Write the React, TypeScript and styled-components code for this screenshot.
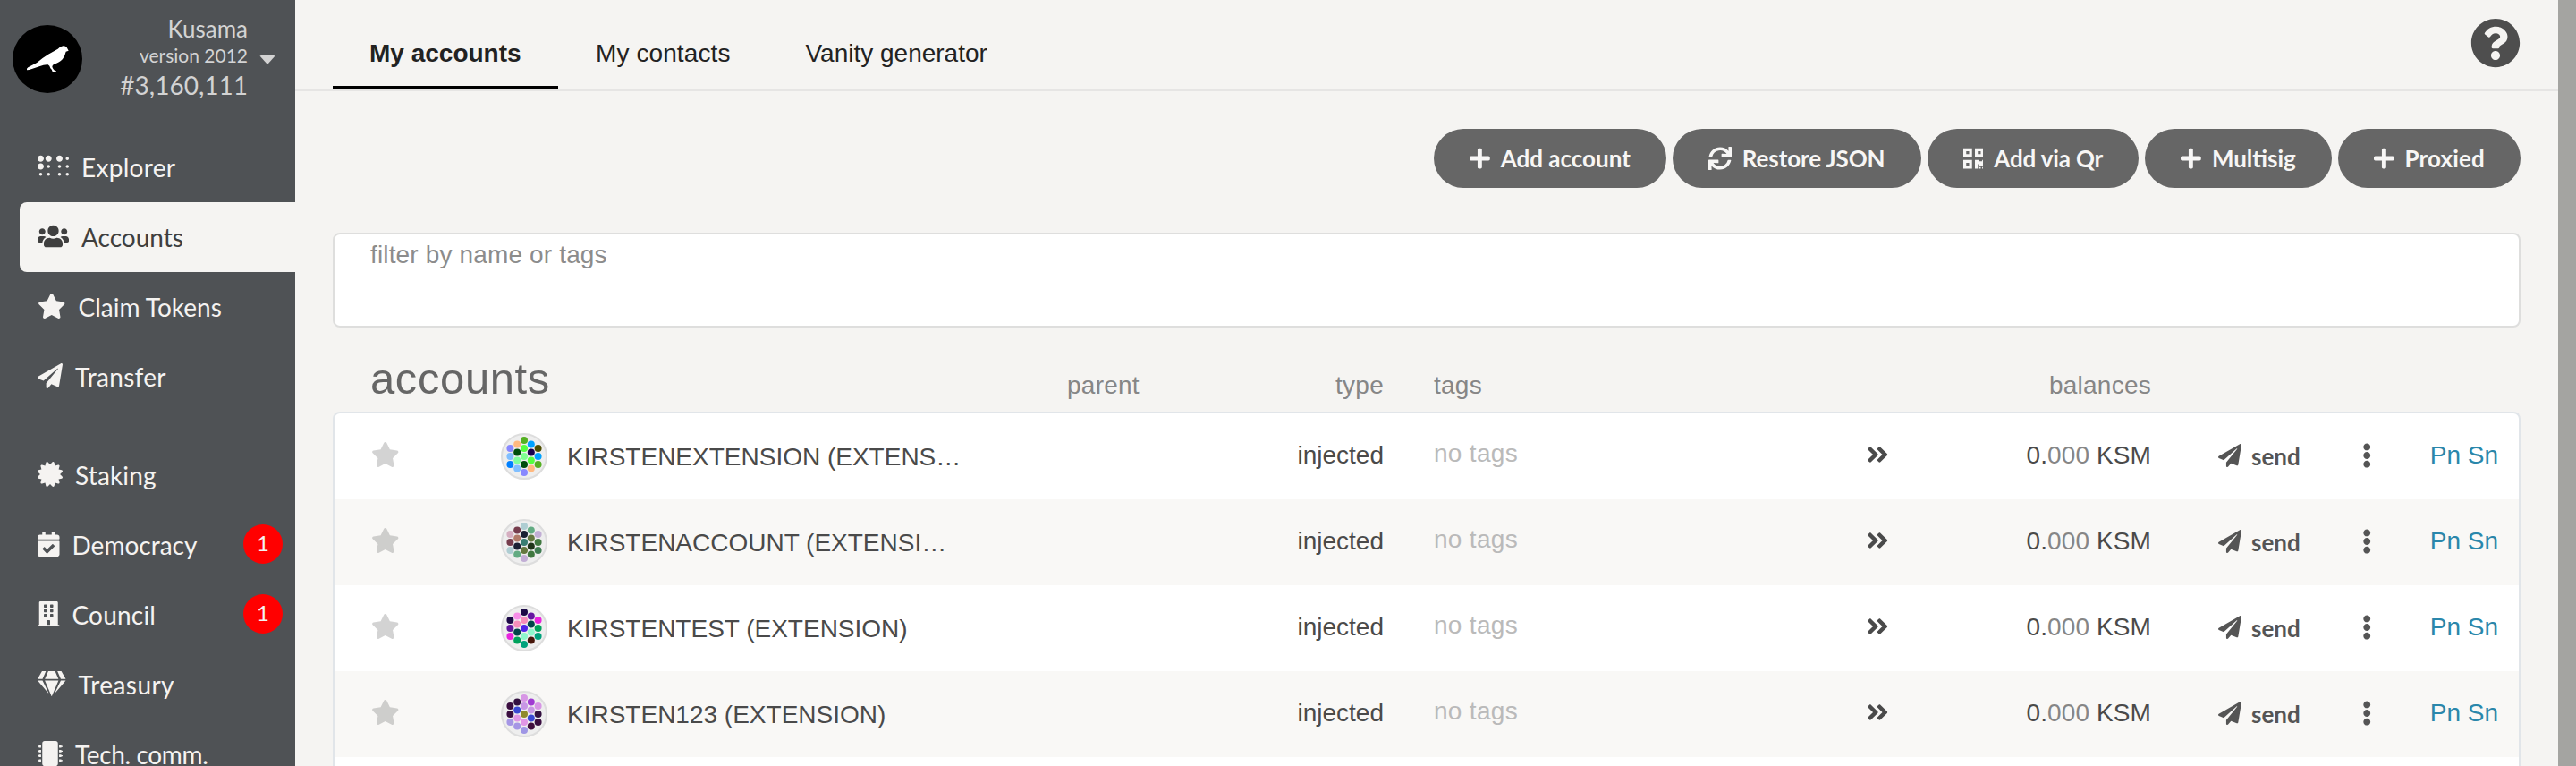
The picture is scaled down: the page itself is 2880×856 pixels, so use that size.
import React from 'react';
import styled, { createGlobalStyle, css } from 'styled-components';
import {
  FaAngleDoubleRight,
  FaBraille,
  FaBuilding,
  FaCalendarCheck,
  FaCertificate,
  FaEllipsisV,
  FaGem,
  FaMicrochip,
  FaPaperPlane,
  FaPlus,
  FaQrcode,
  FaQuestionCircle,
  FaStar,
  FaSync,
  FaUsers,
} from 'react-icons/fa';
import type { IconType } from 'react-icons';

const SANS = '"Liberation Sans", Arial, sans-serif';
const LATO = 'Lato, "Liberation Sans", sans-serif';

const GlobalStyle = createGlobalStyle`
  *, *::before, *::after { box-sizing: border-box; }
  html, body { margin: 0; padding: 0; background: #f5f4f2; overflow: hidden; }
  svg { display: block; flex: none; }
`;

const Page = styled.div`
  display: flex;
  width: 100%;
  height: 856px;
  overflow: hidden;
  background: #f5f4f2;
  color: #4a4a4a;
  font-family: ${SANS};
  font-size: 28px;
`;

/* $ratio is the icon's width over its height. */
const Glyph = styled.span<{ $size: number; $ratio?: number }>`
  flex: none;
  display: inline-flex;

  svg {
    width: ${(p) => p.$size * (p.$ratio ?? 1)}px;
    height: ${(p) => p.$size}px;
  }
`;

/* ---------- sidebar ---------- */

const Sidebar = styled.aside`
  flex: none;
  width: 330px;
  height: 100%;
  overflow: hidden;
  background: #4f5255;
  color: #f5f3f1;
  font-family: ${LATO};
`;

const ChainInfo = styled.div`
  display: flex;
  align-items: flex-start;
  height: 148px;
  padding: 16px 22px 0 14px;
`;

const ChainLogo = styled.svg`
  width: 78px;
  height: 76px;
  margin-top: 12px;
`;

const ChainText = styled.div`
  flex: 1;
  display: flex;
  flex-direction: column;
  text-align: right;
  color: #d3d3d3;
  white-space: nowrap;
`;

const ChainName = styled.div`
  font-size: 26px;
  line-height: 32px;
`;

const ChainVersion = styled.div`
  font-size: 21px;
  line-height: 28px;
`;

const BestBlock = styled.div`
  font-size: 28px;
  line-height: 38px;
`;

const Caret = styled.span`
  width: 0;
  height: 0;
  margin: 46px 0 0 13px;
  border: 9px solid transparent;
  border-bottom: 0;
  border-top: 10px solid #d3d3d3;
  border-radius: 2px;
`;

const NavGroup = styled.nav`
  & + & {
    margin-top: 32px;
  }
`;

const NavItem = styled.a<{ $active?: boolean }>`
  display: flex;
  align-items: center;
  height: 78px;
  margin-left: 22px;
  padding: 0 14px 0 20px;
  border-radius: 8px 0 0 8px;
  ${(p) =>
    p.$active &&
    css`
      background: #f5f4f2;
      color: #3f3f3f;
    `}

  ${Glyph} {
    margin: -2px 14px 0 0;
  }
`;

const NavLabel = styled.span<{ $tracking?: number }>`
  font-size: 28px;
  line-height: 36px;
  letter-spacing: ${(p) => p.$tracking ?? 0}px;
  white-space: nowrap;
`;

const Counter = styled.span`
  width: 44px;
  height: 44px;
  margin: -2px 0 0 auto;
  border-radius: 50%;
  background: #ff0000;
  font-size: 24px;
  line-height: 42px;
  text-align: center;
`;

/* ---------- content ---------- */

const Main = styled.main`
  flex: 1;
  min-width: 0;
`;

const TabBar = styled.header`
  display: flex;
  height: 102px;
  padding: 0 42px;
  border-bottom: 2px solid #e6e5e4;
`;

const Tab = styled.a<{ $active?: boolean; $tracking?: number }>`
  height: 100px;
  padding: 28px 42px 0;
  line-height: 64px;
  color: #222;
  letter-spacing: ${(p) => p.$tracking ?? 0}px;
  white-space: nowrap;
  ${(p) =>
    p.$active &&
    css`
      width: 252px;
      padding-left: 41px;
      border-bottom: 4px solid #000;
      font-weight: 700;
    `}
`;

const Help = styled.span`
  margin: 20px 0 0 auto;
  color: #4e4e4e;
`;

const Content = styled.div`
  padding: 42px 42px 0;
`;

const ButtonRow = styled.div`
  display: flex;
  justify-content: flex-end;
  gap: 7px;
`;

const Button = styled.button<{ $tracking?: number }>`
  display: flex;
  align-items: center;
  gap: 12px;
  height: 66px;
  padding: 0 40px;
  border: 0;
  border-radius: 33px;
  background: #666;
  color: #f7f6f5;
  font: 700 26px/34px ${LATO};
  letter-spacing: ${(p) => p.$tracking ?? 0}px;
  white-space: nowrap;
`;

const Filter = styled.div`
  height: 106px;
  margin-top: 50px;
  padding: 6px 40px;
  border: 2px solid #dededd;
  border-radius: 8px;
  background: #fff;
  color: #8c8c8c;
  line-height: 34px;
  letter-spacing: 0.15px;
`;

const columns = '186px 632px 161px 194px 540px 60px 258px 203px 76px 132px';

const TableHead = styled.div`
  display: grid;
  grid-template-columns: ${columns};
  align-items: baseline;
  height: 94px;
  padding: 27px 2px 0;
  color: #868686;
  line-height: 60px;
  letter-spacing: 0.25px;
`;

const Title = styled.h1`
  grid-column: span 2;
  margin: 0;
  padding-left: 40px;
  color: #666;
  font-size: 49px;
  font-weight: 400;
  line-height: 60px;
  letter-spacing: 0.6px;
`;

const HeadCell = styled.span<{ $span?: number; $right?: boolean; $pad?: number }>`
  grid-column: span ${(p) => p.$span ?? 1};
  padding-left: ${(p) => p.$pad ?? 0}px;
  text-align: ${(p) => (p.$right ? 'right' : 'left')};
`;

const TableBody = styled.div`
  border: 2px solid #e1e5e9;
  border-bottom: 0;
  border-radius: 8px 8px 0 0;
  background: #fff;
`;

const Row = styled.div`
  display: grid;
  grid-template-columns: ${columns};
  align-items: center;
  height: 96px;
  line-height: 34px;
  white-space: nowrap;
  &:nth-child(even) {
    background: #f9f8f6;
  }
`;

const Favorite = styled.span`
  display: flex;
  padding: 0 0 4px 41px;
  color: rgba(78, 78, 78, 0.25);
`;

const Account = styled.div`
  display: flex;
  align-items: center;
  gap: 22px;
`;

const AccountName = styled.span`
  padding-top: 1px;
`;

const Kind = styled.span`
  grid-column: 4;
  padding-bottom: 3px;
  text-align: right;
`;

const Tags = styled.span`
  padding: 0 0 7px 56px;
  color: #bababa;
  letter-spacing: 0.3px;
`;

const Expand = styled.span`
  display: flex;
  padding-bottom: 4px;
`;

const Balance = styled.span`
  padding-bottom: 3px;
  text-align: right;
  letter-spacing: 0.1px;
`;

const Decimals = styled.span`
  color: #868686;
`;

const Send = styled.span`
  display: flex;
  align-items: center;
  gap: 11px;
  padding-left: 75px;
  color: #555;
  font: 700 26px/34px ${LATO};

  ${Glyph} {
    margin-top: -2px;
  }
`;

const Menu = styled.span`
  display: flex;
  padding: 0 0 2px 33px;
  color: #555;
`;

const Links = styled.span`
  padding: 0 23px 3px 0;
  text-align: right;
  color: #2a87ab;
`;

const Scrollbar = styled.div`
  flex: none;
  width: 20px;
  background: #a4a4a1;
`;

/* ---------- data ---------- */

interface Entry {
  label: string;
  icon: IconType;
  ratio?: number;
  tracking?: number;
}

interface NavEntry extends Entry {
  active?: boolean;
  count?: number;
}

const navigation: NavEntry[][] = [
  [
    { label: 'Explorer', icon: FaBraille, ratio: 1.25, tracking: 0.3 },
    { label: 'Accounts', icon: FaUsers, ratio: 1.25, active: true },
    { label: 'Claim Tokens', icon: FaStar, ratio: 1.125 },
    { label: 'Transfer', icon: FaPaperPlane, tracking: 0.3 },
  ],
  [
    { label: 'Staking', icon: FaCertificate, tracking: 0.15 },
    { label: 'Democracy', icon: FaCalendarCheck, ratio: 0.875, count: 1 },
    { label: 'Council', icon: FaBuilding, ratio: 0.875, count: 1, tracking: 0.2 },
    { label: 'Treasury', icon: FaGem, ratio: 1.125, tracking: 0.4 },
    { label: 'Tech. comm.', icon: FaMicrochip, tracking: -0.35 },
  ],
];

const actions: Entry[] = [
  { label: 'Add account', icon: FaPlus, ratio: 0.875 },
  { label: 'Restore JSON', icon: FaSync, tracking: -0.1 },
  { label: 'Add via Qr', icon: FaQrcode, ratio: 0.875, tracking: -0.15 },
  { label: 'Multisig', icon: FaPlus, ratio: 0.875 },
  { label: 'Proxied', icon: FaPlus, ratio: 0.875, tracking: 0.15 },
];

/* Identicon colours, listed column by column from left to right. */
const accounts: { name: string; colors: string[] }[] = [
  {
    name: 'KIRSTENEXTENSION (EXTENS…',
    colors: [
      '#8888ff', '#80bfff', '#0080ff',
      '#ffb980', '#004d0d', '#80ff9f', '#80bfff',
      '#55b022', '#55ff40', '#80ff90', '#004d0d', '#8888ff',
      '#00a2ff', '#1a004d', '#55ff40', '#ffb980',
      '#4d4d00', '#00a2ff', '#55b022',
    ],
  },
  {
    name: 'KIRSTENACCOUNT (EXTENSI…',
    colors: [
      '#d5aec0', '#763d4d', '#aecdd2',
      '#763d4d', '#b27a68', '#1b2033', '#62ab82',
      '#aecdd2', '#1b2033', '#387d72', '#64783f', '#c2aed5',
      '#62ab82', '#64783f', '#1e3419', '#407840',
      '#c2aed5', '#407840', '#407d52',
    ],
  },
  {
    name: 'KIRSTENTEST (EXTENSION)',
    colors: [
      '#1d0a47', '#6516a0', '#e825dd',
      '#f78ee8', '#f78ebb', '#00444a', '#00a25c',
      '#1d0a47', '#f78ebb', '#4f25e8', '#8ef7cc', '#00a27c',
      '#6516a0', '#00444a', '#8ef7cc', '#47160a',
      '#e825dd', '#00a25c', '#00a27c',
    ],
  },
  {
    name: 'KIRSTEN123 (EXTENSION)',
    colors: [
      '#3a0e40', '#3a0e40', '#a596e5',
      '#33103f', '#3b48d2', '#e096e5', '#a596e5',
      '#d796e5', '#c896e5', '#8f8a2d', '#e096e5', '#9f96e5',
      '#a03bd2', '#c896e5', '#3b48d2', '#400e3d',
      '#d796e5', '#33103f', '#3a0e40',
    ],
  },
];

const dots: [number, number][] = [3, 4, 5, 4, 3].flatMap((count, col) =>
  Array.from({ length: count }, (_, i): [number, number] => [
    26 + (col - 2) * 7.8,
    26 + (i - (count - 1) / 2) * 9,
  ]),
);

function Identicon({ colors }: { colors: string[] }) {
  return (
    <svg width="52" height="52" viewBox="0 0 52 52">
      <circle cx="26" cy="26" r="25" fill="#eee" stroke="#ddd" strokeWidth="2" />
      {dots.map(([x, y], i) => (
        <circle key={i} cx={x} cy={y} r="4" fill={colors[i]} />
      ))}
    </svg>
  );
}

function BirdLogo() {
  return (
    <ChainLogo viewBox="12 12 234 228" preserveAspectRatio="none">
      <ellipse cx="129" cy="126" rx="117" ry="114" fill="#000" />
      <path
        fill="#fff"
        d="M60 163 Q58 158 64 154 L94 138 Q112 122 132 110 L164 92 Q172 83 182 82 Q193 82 196 91 L200 98 L191 101 Q188 116 180 126 Q168 139 151 143 Q145 146 145 152 Q148 161 153 164 L159 166 L157 169 L146 168 Q144 160 139 157 Q137 148 131 145 Q118 144 104 150 L68 162 Z"
      />
    </ChainLogo>
  );
}

export default function App() {
  return (
    <Page>
      <GlobalStyle />
      <Sidebar>
        <ChainInfo>
          <BirdLogo />
          <ChainText>
            <ChainName>Kusama</ChainName>
            <ChainVersion>version 2012</ChainVersion>
            <BestBlock>#3,160,111</BestBlock>
          </ChainText>
          <Caret />
        </ChainInfo>
        {navigation.map((group, g) => (
          <NavGroup key={g}>
            {group.map(({ label, icon: Icon, ratio, active, count, tracking }) => (
              <NavItem key={label} $active={active}>
                <Glyph $size={28} $ratio={ratio}>
                  <Icon />
                </Glyph>
                <NavLabel $tracking={tracking}>{label}</NavLabel>
                {count && <Counter>{count}</Counter>}
              </NavItem>
            ))}
          </NavGroup>
        ))}
      </Sidebar>
      <Main>
        <TabBar>
          <Tab $active>My accounts</Tab>
          <Tab $tracking={0.1}>My contacts</Tab>
          <Tab>Vanity generator</Tab>
          <Help>
            <Glyph $size={56}>
              <FaQuestionCircle />
            </Glyph>
          </Help>
        </TabBar>
        <Content>
          <ButtonRow>
            {actions.map(({ label, icon: Icon, ratio, tracking }) => (
              <Button key={label} $tracking={tracking}>
                <Glyph $size={26} $ratio={ratio}>
                  <Icon />
                </Glyph>
                {label}
              </Button>
            ))}
          </ButtonRow>
          <Filter>filter by name or tags</Filter>
          <TableHead>
            <Title>accounts</Title>
            <HeadCell $pad={1}>parent</HeadCell>
            <HeadCell $right>type</HeadCell>
            <HeadCell $pad={56}>tags</HeadCell>
            <HeadCell $span={2} $right>
              balances
            </HeadCell>
          </TableHead>
          <TableBody>
            {accounts.map(({ name, colors }) => (
              <Row key={name}>
                <Favorite>
                  <Glyph $size={28} $ratio={1.125}>
                    <FaStar />
                  </Glyph>
                </Favorite>
                <Account>
                  <Identicon colors={colors} />
                  <AccountName>{name}</AccountName>
                </Account>
                <Kind>injected</Kind>
                <Tags>no tags</Tags>
                <Expand>
                  <Glyph $size={28} $ratio={0.875}>
                    <FaAngleDoubleRight />
                  </Glyph>
                </Expand>
                <Balance>
                  0.<Decimals>000</Decimals> KSM
                </Balance>
                <Send>
                  <Glyph $size={26}>
                    <FaPaperPlane />
                  </Glyph>
                  send
                </Send>
                <Menu>
                  <Glyph $size={28} $ratio={0.375}>
                    <FaEllipsisV />
                  </Glyph>
                </Menu>
                <Links>Pn Sn</Links>
              </Row>
            ))}
            <Row />
          </TableBody>
        </Content>
      </Main>
      <Scrollbar />
    </Page>
  );
}
